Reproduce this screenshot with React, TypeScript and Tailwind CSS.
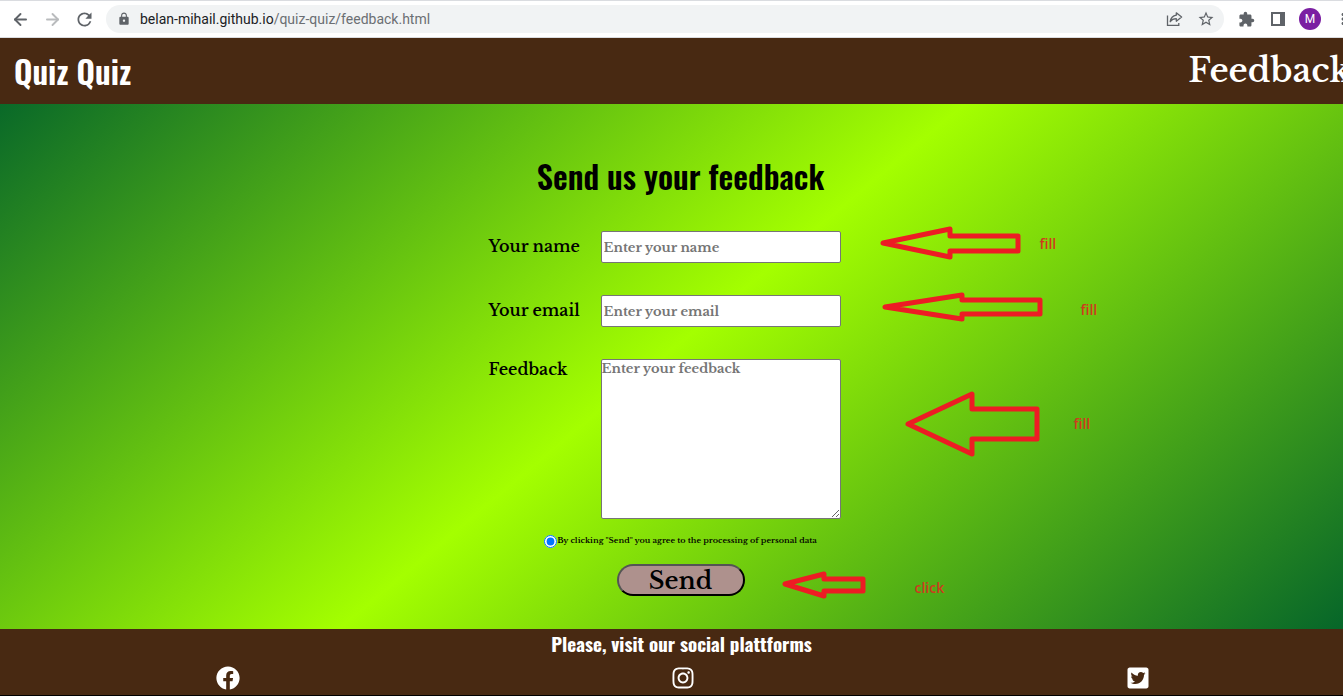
import type { ReactNode } from "react";
import { ArrowLeft, ArrowRight } from "lucide-react";
import { MdRefresh, MdLock, MdStarBorder, MdExtension, MdMoreVert } from "react-icons/md";
import { FaFacebook, FaInstagram, FaTwitterSquare } from "react-icons/fa";

const CONDENSED = "font-['Oswald','Liberation_Sans_Narrow','Liberation_Sans',sans-serif]";

function IconButton({ label, children }: { label: string; children: ReactNode }) {
  return (
    <button type="button" aria-label={label} className="flex size-8 shrink-0 items-center justify-center text-[#5f6368]">
      {children}
    </button>
  );
}

function BrowserBar() {
  return (
    <div className="flex h-[38px] items-center overflow-hidden border-y border-[#dadce0] bg-white pl-1 font-[Roboto,sans-serif] font-normal">
      <IconButton label="Back"><ArrowLeft size={19} strokeWidth={2.4} /></IconButton>
      <IconButton label="Forward"><ArrowRight size={19} strokeWidth={2.4} className="text-[#b9bbbd]" /></IconButton>
      <IconButton label="Reload"><MdRefresh size={21} /></IconButton>
      <div className="ml-1.5 flex h-7 min-w-0 flex-1 items-center rounded-full bg-[#f1f3f4] pl-[11px] pr-0.5">
        <MdLock size={14} className="shrink-0 text-[#5f6368]" />
        <p className="ml-[9px] flex-1 text-sm text-[#202124]">
          belan-mihail.github.io<span className="text-[#6b6f73]">/quiz-quiz/feedback.html</span>
        </p>
        <IconButton label="Share">
          <svg width="17" height="16" viewBox="0 0 17 16" fill="none" stroke="currentColor" strokeWidth="1.3">
            <path d="M1.500 4.500v9.800h11.300V12" />
            <path d="M10.300 1.800 15.600 6l-5.300 4.200V7.700C7.500 7.700 5.600 8.600 4.200 10.700 4.700 7.200 6.700 4.800 10.300 4.200Z" strokeLinejoin="round" />
          </svg>
        </IconButton>
        <IconButton label="Bookmark"><MdStarBorder size={18} /></IconButton>
      </div>
      <div className="ml-1.5 flex w-[113px] shrink-0 items-center">
        <IconButton label="Extensions"><MdExtension size={17} /></IconButton>
        <IconButton label="Side panel">
          <svg width="14" height="14" viewBox="0 0 14 14">
            <path fill="currentColor" fillRule="evenodd" d="M0 0h14v14H0ZM2 2v10h7V2Z" />
          </svg>
        </IconButton>
        <button type="button" aria-label="Profile" className="ml-[5px] flex size-[22px] shrink-0 items-center justify-center rounded-full bg-[#7b1fa2] text-xs text-white">M</button>
        <span className="ml-1.5"><IconButton label="More"><MdMoreVert size={18} /></IconButton></span>
      </div>
    </div>
  );
}

type NoteProps = { points: string; width: number; height: number; place: string; text: string; textPlace: string };

const notes: NoteProps[] = [
  { points: "3,17 70,3 70,10 138,10 138,25 70,25 70,31", width: 142, height: 36, place: "left-[208px] top-[122px]", text: "fill", textPlace: "left-[368px] top-[132px]" },
  { points: "3,15 80,3 80,8 158,8 158,22 80,22 80,27", width: 162, height: 30, place: "left-[210px] top-[188px]", text: "fill", textPlace: "left-[409px] top-[198px]" },
  { points: "3,34 67,4 67,19 132,19 132,49 67,49 67,64", width: 136, height: 68, place: "left-[233px] top-[286px]", text: "fill", textPlace: "left-[402px] top-[312px]" },
  { points: "3,15 42,5 42,10 81,10 81,22 42,22 42,27", width: 86, height: 32, place: "left-[110px] top-[465px]", text: "click", textPlace: "left-[243px] top-[476px]" },
];

function Note({ points, width, height, place, text, textPlace }: NoteProps) {
  return (
    <>
      <svg width={width} height={height} className={`absolute ${place}`} aria-hidden="true">
        <polygon points={points} fill="none" stroke="#ed1c24" strokeWidth="5" strokeLinejoin="round" />
      </svg>
      <span className={`absolute ${textPlace} font-['Open_Sans',sans-serif] text-sm leading-4 text-[#cf3a1e]`}>{text}</span>
    </>
  );
}

const fieldStyle =
  "w-60 rounded-[2px] border border-[#767676] bg-white text-[13px] font-bold text-black placeholder:text-[#757575]";

export default function App() {
  return (
    <div className="flex min-h-screen flex-col overflow-x-hidden font-['Libre_Baskerville','DejaVu_Serif',serif] font-semibold text-black">
      <BrowserBar />
      <header className="flex h-[66px] items-center justify-between overflow-hidden bg-[#482912] pl-3.5 text-white">
        <a href="#home" className={`${CONDENSED} text-[32px] leading-10`}>Quiz Quiz</a>
        <a href="#feedback" className="-mr-2 text-[33px] leading-10">Feedback</a>
      </header>

      <main className="relative flex flex-1 flex-col items-center overflow-hidden bg-[linear-gradient(140deg,#00602b_-3%,#a4ff00_49%,#00602b_102%)] pl-[18px]">
        <h1 className={`${CONDENSED} mt-[52px] text-[32px] leading-10`}>Send us your feedback</h1>
        <form className="mt-[35px] flex flex-col items-center" onSubmit={(e) => e.preventDefault()}>
          <div className="-ml-8 grid grid-cols-[112px_240px] gap-y-8">
            <label htmlFor="name" className="leading-[30px]">Your name</label>
            <input id="name" type="text" placeholder="Enter your name" className={`${fieldStyle} h-8 px-0.5`} />
            <label htmlFor="email" className="leading-[30px]">Your email</label>
            <input id="email" type="email" placeholder="Enter your email" className={`${fieldStyle} h-8 px-0.5`} />
            <label htmlFor="feedback" className="leading-5">Feedback</label>
            <textarea id="feedback" placeholder="Enter your feedback" className={`${fieldStyle} h-40 resize leading-[18px]`} />
          </div>
          <div className="mt-[15px] flex items-start">
            <input id="agree" type="radio" defaultChecked className="mt-px size-[13px]" />
            <label htmlFor="agree" className="text-[8px] leading-3">By clicking "Send" you agree to the processing of personal data</label>
          </div>
          <button type="submit" className="mt-4 h-8 w-32 rounded-full border-2 border-black bg-[#ae918d] text-2xl leading-7 pt-px [border-style:outset]">Send</button>
        </form>
        <div className="absolute left-1/2 top-0">
          {notes.map((note) => <Note key={note.textPlace} {...note} />)}
        </div>
      </main>

      <footer className="h-[67px] overflow-hidden border-b border-black bg-[#482912] text-white">
        <p className={`${CONDENSED} pl-5 text-center text-[19px] font-bold leading-7`}>Please, visit our social plattforms</p>
        <nav aria-label="Social" className="-mr-[22px] flex justify-around pt-[9px]">
          <a href="#facebook" aria-label="Facebook"><FaFacebook size={24} /></a>
          <a href="#instagram" aria-label="Instagram"><FaInstagram size={24} /></a>
          <a href="#twitter" aria-label="Twitter"><FaTwitterSquare size={24} /></a>
        </nav>
      </footer>
    </div>
  );
}
